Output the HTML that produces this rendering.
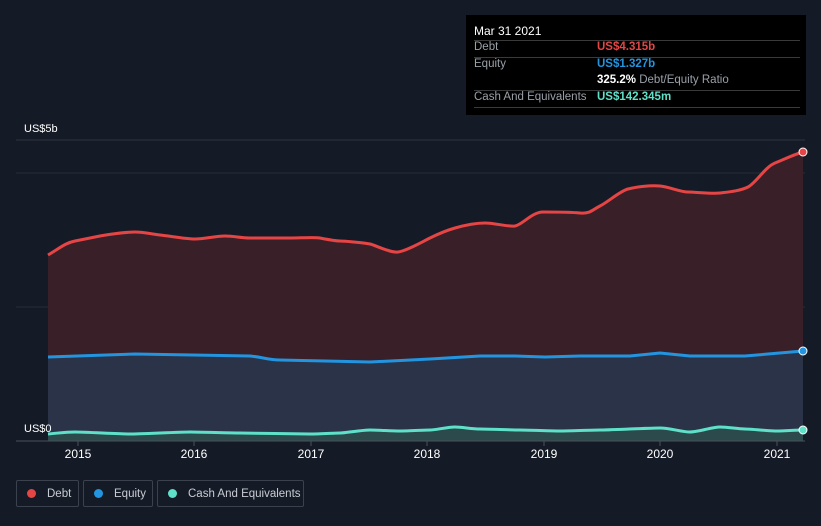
<!DOCTYPE html>
<html><head><meta charset="utf-8"><style>
body{margin:0;width:821px;height:526px;background:#151b26;font-family:"Liberation Sans",sans-serif;overflow:hidden;position:relative}
.tt{position:absolute;left:466px;top:15px;width:340px;height:100px;background:#000;color:#fff;font-size:11.5px}
.tt .r{position:absolute;left:8px;right:6px;border-top:1px solid #3a3a3a}
.tt div{white-space:nowrap}
.lg{position:absolute;top:480px;height:27px;border:1px solid #3c424d;border-radius:2px;color:#c8ccd2;font-size:11.5px;line-height:26px;box-sizing:border-box;white-space:nowrap}
.lg i{display:inline-block;width:9px;height:9px;border-radius:50%;margin:0 11px 0 10px;vertical-align:-1px}
</style></head><body>
<svg width="821" height="526" style="position:absolute;left:0;top:0">
<line x1="16" y1="140" x2="805" y2="140" stroke="#2e3440"/>
<line x1="16" y1="173" x2="805" y2="173" stroke="#262c37"/>
<line x1="16" y1="307" x2="805" y2="307" stroke="#262c37"/>
<path d="M48,255 C60,248 65,243 75,241 S95,237 100,236 S125,232 135,232 S150,234 160,235 S185,239 195,239 S215,236 225,236 S240,238 250,238 S280,238 290,238 S315,237 320,238 S335,241 340,241 S365,243 370,244 S390,253 398,252 S420,243 430,238 S448,230 455,228 S475,223 485,223 S508,227 515,226 S532,212 543,212 S570,212 580,213 S592,210 600,206 S620,191 628,189 S650,185 660,186 S680,192 688,192 S712,194 720,193 S740,191 748,187 S765,167 775,163 S795,154 803,152 L803,441 L48,441Z" fill="#391f27"/>
<path d="M48,357 L135,354 L250,356 C262,357 268,360 280,360 L370,362 L430,359 L480,356 L515,356 L545,357 L580,356 L630,356 L660,353 L690,356 L745,356 L803,351 L803,441 L48,441Z" fill="#2a3347"/>
<path d="M48,434 C60,433 65,432 75,432 S120,434 130,434 S180,432 190,432 S230,433 240,433 S300,434 310,434 S335,433 340,433 S362,430 370,430 S392,431 400,431 S425,430 430,430 S448,427 455,427 S472,429 480,429 S512,430 520,430 S552,431 560,431 S592,430 600,430 S650,428 660,428 S682,432 690,432 S712,427 720,427 S738,429 745,429 S768,431 775,431 S797,430 803,430 L803,441 L48,441Z" fill="#2c4a4c"/>
<path d="M48,255 C60,248 65,243 75,241 S95,237 100,236 S125,232 135,232 S150,234 160,235 S185,239 195,239 S215,236 225,236 S240,238 250,238 S280,238 290,238 S315,237 320,238 S335,241 340,241 S365,243 370,244 S390,253 398,252 S420,243 430,238 S448,230 455,228 S475,223 485,223 S508,227 515,226 S532,212 543,212 S570,212 580,213 S592,210 600,206 S620,191 628,189 S650,185 660,186 S680,192 688,192 S712,194 720,193 S740,191 748,187 S765,167 775,163 S795,154 803,152" fill="none" stroke="#e64545" stroke-width="3"/>
<path d="M48,357 L135,354 L250,356 C262,357 268,360 280,360 L370,362 L430,359 L480,356 L515,356 L545,357 L580,356 L630,356 L660,353 L690,356 L745,356 L803,351" fill="none" stroke="#2394df" stroke-width="3" stroke-linejoin="round"/>
<path d="M48,434 C60,433 65,432 75,432 S120,434 130,434 S180,432 190,432 S230,433 240,433 S300,434 310,434 S335,433 340,433 S362,430 370,430 S392,431 400,431 S425,430 430,430 S448,427 455,427 S472,429 480,429 S512,430 520,430 S552,431 560,431 S592,430 600,430 S650,428 660,428 S682,432 690,432 S712,427 720,427 S738,429 745,429 S768,431 775,431 S797,430 803,430" fill="none" stroke="#5fe0c8" stroke-width="3"/>
<circle cx="803" cy="152" r="4" fill="#e64545" stroke="#fff" stroke-width="1"/>
<circle cx="803" cy="351" r="4" fill="#2394df" stroke="#fff" stroke-width="1"/>
<circle cx="803" cy="430" r="4" fill="#5fe0c8" stroke="#fff" stroke-width="1"/>
<line x1="16" y1="441" x2="805" y2="441" stroke="#4a505a"/>
<g stroke="#4a505a"><line x1="78" y1="441" x2="78" y2="446"/><line x1="194" y1="441" x2="194" y2="446"/><line x1="311" y1="441" x2="311" y2="446"/><line x1="427" y1="441" x2="427" y2="446"/><line x1="544" y1="441" x2="544" y2="446"/><line x1="660" y1="441" x2="660" y2="446"/><line x1="777" y1="441" x2="777" y2="446"/></g>
<g fill="#fff" font-size="12" text-anchor="middle" font-family="Liberation Sans"><text x="78" y="458">2015</text><text x="194" y="458">2016</text><text x="311" y="458">2017</text><text x="427" y="458">2018</text><text x="544" y="458">2019</text><text x="660" y="458">2020</text><text x="777" y="458">2021</text></g>
<text x="24" y="132" fill="#fff" font-size="11" font-family="Liberation Sans">US$5b</text>
<text x="24" y="432" fill="#fff" font-size="11" font-family="Liberation Sans">US$0</text>
</svg>
<div class="tt">
<div style="position:absolute;left:8px;top:9px;font-size:12px">Mar 31 2021</div>
<div class="r" style="top:25px"></div>
<div style="position:absolute;left:8px;top:26px;color:#9aa0a8">Debt</div><div style="position:absolute;left:131px;top:26px;color:#e64545;font-weight:bold">US$4.315b</div>
<div class="r" style="top:42px"></div>
<div style="position:absolute;left:8px;top:43px;color:#9aa0a8">Equity</div><div style="position:absolute;left:131px;top:43px;color:#2394df;font-weight:bold">US$1.327b</div>
<div style="position:absolute;left:131px;top:59px"><b>325.2%</b> <span style="color:#9aa0a8">Debt/Equity Ratio</span></div>
<div class="r" style="top:75px"></div>
<div style="position:absolute;left:8px;top:76px;color:#9aa0a8">Cash And Equivalents</div><div style="position:absolute;left:131px;top:76px;color:#5fe0c8;font-weight:bold">US$142.345m</div>
<div class="r" style="top:92px"></div>
</div>
<div class="lg" style="left:16px;width:63px"><i style="background:#e64545"></i>Debt</div>
<div class="lg" style="left:83px;width:70px"><i style="background:#2394df"></i>Equity</div>
<div class="lg" style="left:157px;width:147px"><i style="background:#5fe0c8"></i>Cash And Equivalents</div>
</body></html>
